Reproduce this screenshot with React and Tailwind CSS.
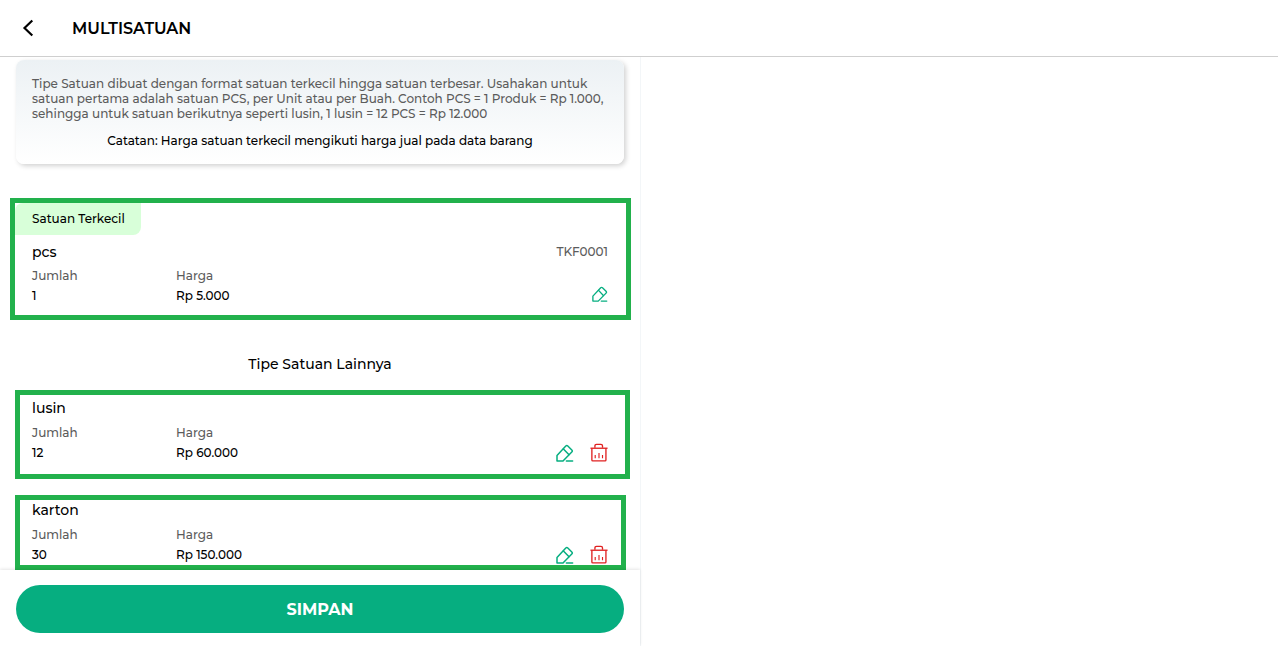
import React from "react";

const otherUnits = [
  { name: "lusin", qty: "12", price: "Rp 60.000" },
  { name: "karton", qty: "30", price: "Rp 150.000" },
];

function EditIcon({ className }) {
  return (
    <svg
      className={className}
      viewBox="0 0 18 18"
      fill="none"
      stroke="currentColor"
      strokeWidth="1.5"
      strokeLinejoin="round"
      strokeLinecap="round"
    >
      <path d="M1 17V11.4L9.8 2Q10.8 1 11.8 2L15.8 6Q16.8 7 15.8 8L7 17Z" />
      <path d="M7.4 4.9L12.8 10.6" />
      <path d="M10.4 17H16.6" />
    </svg>
  );
}

function TrashIcon({ className }) {
  return (
    <svg
      className={className}
      viewBox="0 0 18 20"
      fill="none"
      stroke="currentColor"
      strokeWidth="1.4"
      strokeLinejoin="round"
    >
      <path d="M0 5.5H18" />
      <path d="M4.7 5V3.2Q4.7 1.5 6.4 1.5H11Q12.7 1.5 12.7 3.2V5" />
      <path d="M1.5 5.5V18Q1.5 18.9 2.4 18.9H15.4Q16.3 18.9 16.3 18V5.5" />
      <path d="M5 12.5V16M9 10.5V16M12.7 12.5V16" strokeWidth="1.2" />
    </svg>
  );
}

function UnitDetail({ qty, price, children }) {
  return (
    <div className="flex items-end">
      <dl className="w-36">
        <dt className="text-[#5c5c5c]">Jumlah</dt>
        <dd>{qty}</dd>
      </dl>
      <dl className="flex-1">
        <dt className="text-[#5c5c5c]">Harga</dt>
        <dd>{price}</dd>
      </dl>
      <div className="flex items-center gap-4 pb-px">{children}</div>
    </div>
  );
}

export default function App() {
  return (
    <div className="h-screen flex flex-col bg-white text-black font-['Montserrat','Inter',sans-serif] text-xs leading-5 font-medium">
      <header className="h-[57px] shrink-0 flex items-center px-4 border-b border-[#cfcfcf] z-10">
        <button type="button" aria-label="Kembali" className="w-6 h-6">
          <svg
            className="w-6 h-6"
            viewBox="0 0 24 24"
            fill="none"
            stroke="currentColor"
            strokeWidth="2.2"
          >
            <path d="M16.3 4.5L8.5 12L16.3 19.5" />
          </svg>
        </button>
        <h1 className="ml-8 pt-px text-base font-semibold">MULTISATUAN</h1>
      </header>

      <div className="w-[calc(50%+1px)] box-content border-r border-[#f3f6f8] flex-1 min-h-0 flex flex-col">
        <main className="flex-1 min-h-0 overflow-hidden pt-[3px]">
          <section className="mx-4 p-4 rounded-lg bg-linear-to-b from-[#ecf1f4] to-white leading-[15px] shadow-[2px_2px_5px_rgba(0,0,0,0.18)]">
            <p className="text-[#5c5c5c]">
              Tipe Satuan dibuat dengan format satuan terkecil hingga satuan
              terbesar. Usahakan untuk satuan pertama adalah satuan PCS, per
              Unit atau per Buah. Contoh PCS = 1 Produk = Rp 1.000, sehingga
              untuk satuan berikutnya seperti lusin, 1 lusin = 12 PCS = Rp
              12.000
            </p>
            <p className="mt-3 text-center">
              Catatan: Harga satuan terkecil mengikuti harga jual pada data
              barang
            </p>
          </section>

          <section className="mt-[34px] mx-[9px] ml-[10px] border-5 border-[#22b14c]">
            <span className="inline-block h-8 pl-[17px] pr-4 py-1.5 rounded-tl-lg rounded-br-lg bg-[#d8ffd9]">
              Satuan Terkecil
            </span>
            <div className="pl-[17px] pr-[18px] pb-[9px]">
              <div className="mt-[7px] mb-1 flex justify-between">
                <h2 className="text-sm">pcs</h2>
                <span className="text-[#5c5c5c]">TKF0001</span>
              </div>
              <UnitDetail qty="1" price="Rp 5.000">
                <button type="button" aria-label="Ubah pcs" className="pb-[3px]">
                  <EditIcon className="w-4 h-4 text-[#06ae80]" />
                </button>
              </UnitDetail>
            </div>
          </section>

          <h2 className="mt-[34px] mb-4 text-center text-sm">
            Tipe Satuan Lainnya
          </h2>

          <div className="flex flex-col gap-4 ml-[15px] mr-[10px]">
            {otherUnits.map((unit) => (
              <section
                key={unit.name}
                className="border-5 border-[#22b14c] pl-3 pr-[17px] pt-[3px] pb-[11px] last:pt-0 last:pb-0 last:pr-[13px] last:mr-1"
              >
                <h3 className="mb-[5px] text-sm">{unit.name}</h3>
                <UnitDetail qty={unit.qty} price={unit.price}>
                  <button type="button" aria-label={"Ubah " + unit.name}>
                    <EditIcon className="w-[18px] h-[18px] text-[#06ae80]" />
                  </button>
                  <button type="button" aria-label={"Hapus " + unit.name}>
                    <TrashIcon className="w-[18px] h-[19px] text-[#e02020]" />
                  </button>
                </UnitDetail>
              </section>
            ))}
          </div>
        </main>

        <footer className="shrink-0 px-4 pt-[15px] pb-[13px] bg-white shadow-[0_-1px_3px_rgba(0,0,0,0.1)]">
          <button
            type="button"
            className="w-full h-12 pt-px rounded-full bg-[#06ae80] text-white text-base font-bold"
          >
            SIMPAN
          </button>
        </footer>
      </div>
    </div>
  );
}
